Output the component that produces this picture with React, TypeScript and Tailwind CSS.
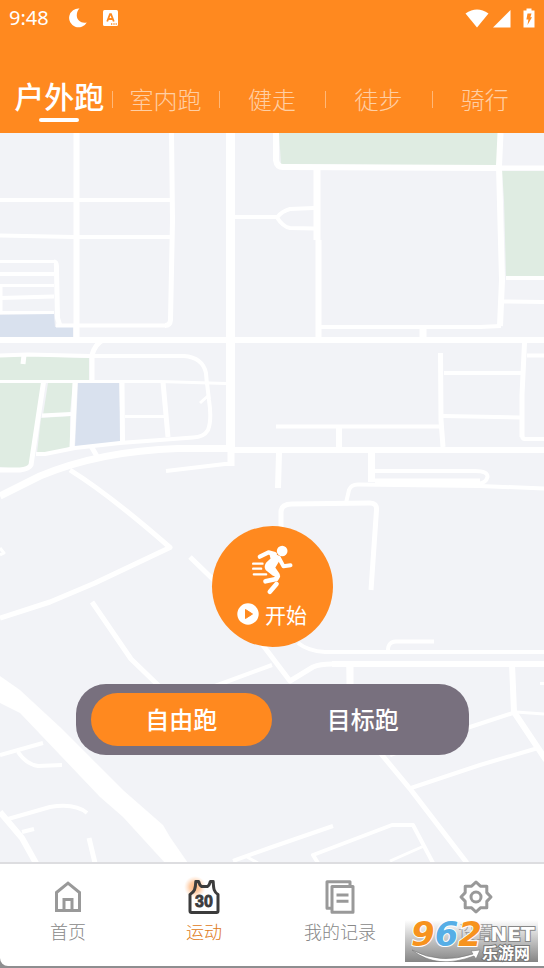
import { useState } from 'react'
import clsx from 'clsx'

const SPORTS = ['户外跑', '室内跑', '健走', '徒步', '骑行']
const MODES = ['自由跑', '目标跑']

const PARKS = [
  'M279 133H498V158L496 166L281 164Z',
  'M502 171H544V276H506L504 200Z',
  'M0 357L28 356L89 358V381H0Z',
  'M0 383H42L30 462Q28 468 18 469L0 467Z',
  'M48 383H73L70 413L43 415Z',
  'M41 418L70 416V447L58 451L37 453Z',
]

const LAKES = ['M0 315L54 314L55 327H73V337H0Z', 'M78 383H119L121 442L75 447Z']

const ROADS = [
  { w: 3, d: 'M0 261.5H54M0 285.5H54M0 312.5H54M1 287V312M0 381.5H160L226 383.5M125 416.5H164M209 395L200 403M0 548L4 553L0 555M516 712L544 714M540 683.5H544M390 861L424 846M247 857L258 863' },
  { w: 4, d: 'M0 200H170M0 235.5L74 237H170M235 217H277M0 274H54M0 298L54 296.5M56 325.5H166M0 355.5L28 354.5L90 356H184C198 357 204 364 206 373L207 385M42 415.5L71 414' },
  { w: 4, d: 'M207 383L209 400Q212 420 208 430Q204 437 193 437.5L120 443L75 448L45 454H36M166 471L225 464H231M215 686L272 665M272 847L333 826M233 861L272 847M0 755L43 743M18 752Q26 764 38 766L62 765M8 819L50 807Q75 803 87 813M22 832L34 829' },
  { w: 4, d: 'M506 278H544M504 301.5L544 302M314 208L290 209Q282 211 277 217.5Q283 227 290 228L314 228.5M444 373H522M443 416L520 417.5M527 355.5H544M276 426.5H440M522 435Q522 439 525 439H544M321 327H480L501 326M375 471H475Q488 471 487.5 477Q486 483 478 484' },
  { w: 4, d: 'M318 863L313 855L392 825H413L433 863M516 712L470 727L390 755M411 788L480 765L538 748M298 643Q308 651 325 652H544M388 652Q387 642 396 641.5H434M346 503L349 490Q351 484.5 358 484.5L480 486L544 488.5' },
  { w: 5, d: 'M171.5 133L172.5 220L170.5 320Q170 325.5 165 325.5M54 262Q57 262 56.5 270L57.5 318L60 326M103 340Q95 344 92 355V382M24 355L23 364M43.5 382L31 465Q29 469 20 470H0M75 383L72 447M122 382L122.5 443M163 382L168 437M91 446L98 458M70 470Q110 495 170 547.5L95 583L50 602L0 618' },
  { w: 5, d: 'M190 557L222 588M262 644L290 681L313 667Q320 664 332 664M92 602L118 640L131 659L160 687M89 838L95 863M349 666L350 700L364 733L382 755L411 790L467 863M497 168H544M440.5 353L441 420L443 447M524.5 343L522 395V437M281 530V512Q281 504 292 504L370 503Q377 503 376.5 510L371 590' },
  { w: 6, d: 'M76.5 133V337M276 133V160Q277 167 283 167L497 168M500.5 133L499 166L502 280L500 326M318.5 240V340M339 428V447M279 453L278 488M332 664H544M512 664L514 712L546 760M0 340H544M0 812L22 838L37 865M230 450H544' },
  { w: 7, d: 'M317 168V240M423 329V337M371.5 453V482M350 667V684M375 482H480M231 449V466M0 496L40 476Q100 451 178 448.5H232' },
  { w: 9, d: 'M230.5 133V452' },
]

// wide avenue whose width changes along the way
const AVENUE =
  'M0 676L20 690L60 727L90 757L123 790L163 825L170 837L188 863H165L123 817L100 797L60 755L20 713L10 708L0 703Z'

function MapBackground() {
  return (
    <svg
      className="absolute inset-0 h-full w-full"
      viewBox="0 133 544 729"
      preserveAspectRatio="xMidYMid slice"
      aria-hidden="true"
    >
      {PARKS.map((d) => (
        <path key={d} d={d} fill="#dfece2" />
      ))}
      {LAKES.map((d) => (
        <path key={d} d={d} fill="#d9e1ee" />
      ))}
      {ROADS.map((road) => (
        <path key={road.d} d={road.d} fill="none" stroke="#fff" strokeWidth={road.w} strokeLinejoin="round" />
      ))}
      <path d={AVENUE} fill="#fff" />
    </svg>
  )
}

function StatusBar() {
  return (
    <div className="flex h-9 items-center justify-between px-[9px]">
      <div className="flex items-center">
        <span className="font-['Noto_Sans'] text-[20px] leading-6">9:48</span>
        <svg className="ml-5 h-5 w-[18px]" viewBox="0 0 18 20" fill="currentColor" aria-hidden="true">
          <path d="M10.5 0.6A9.4 9.4 0 1 0 17.8 14.4C12.5 15.8 8.2 12.5 7.8 8C7.6 5 8.6 2.3 10.5 0.6Z" />
        </svg>
        <svg className="ml-4 h-4 w-[15px]" viewBox="0 0 15 16" aria-hidden="true">
          <rect width="15" height="16" rx="1.5" fill="#fff" />
          <path d="M4.2 11.5L7 4.2H8L10.8 11.5M5.3 9H9.7" fill="none" stroke="#ff891f" strokeWidth="1.8" />
          <path d="M8 14H9.3M10.4 14H11.6M12.6 14H13.8" stroke="#ff891f" strokeWidth="1.3" />
        </svg>
      </div>
      <div className="flex items-center">
        <svg className="h-[19px] w-6" viewBox="0 0 24 19" fill="currentColor" aria-hidden="true">
          <path d="M0.5 4.6Q12 -3.4 23.5 4.6L12 18.5Z" />
        </svg>
        <svg className="ml-1 h-[19px] w-[18px]" viewBox="0 0 18 19" fill="currentColor" aria-hidden="true">
          <path d="M0 18.5L17.5 1V18.5Z" />
        </svg>
        <svg className="ml-3 h-5 w-3" viewBox="0 0 12 20" aria-hidden="true">
          <path d="M0.5 2.5H3.5V0.5H8.5V2.5H11.5V19.5H0.5Z" fill="#fff" />
          <path d="M4.5 5.5H8.5L7.3 9.3H9L4.5 17L5.4 11.6H3.4Z" fill="#ff891f" />
        </svg>
      </div>
    </div>
  )
}

function RunnerIcon() {
  return (
    <svg className="h-[50px] w-[41px]" viewBox="0 0 122 150" fill="none" stroke="#fff" strokeLinecap="round" strokeLinejoin="round" aria-hidden="true">
      <circle cx="90" cy="18" r="16" fill="#fff" stroke="none" />
      <path d="M23 35L49 22L68 27" strokeWidth="13" />
      <path d="M56 26L82 38L64 68L78 88L64 88L44 72Q39 64 47 54L60 42Z" fill="#fff" strokeWidth="9" />
      <path d="M82 42L94 64L115 61" strokeWidth="12" />
      <path d="M54 74L77 94L72 102L40 109" strokeWidth="14" />
      <path d="M73 117L53 140" strokeWidth="14" />
      <path d="M3 56H31M3 71H27M5 88H42" strokeWidth="7" />
    </svg>
  )
}

function HomeIcon() {
  return (
    <svg className="size-9" viewBox="0 0 36 36" fill="none" stroke="#999" strokeWidth="3" aria-hidden="true">
      <path d="M6.5 13.5L18 4.2L29.5 13.5V31.5H6.5Z" />
      <path d="M14 31.5V20.5H22V31.5" />
    </svg>
  )
}

function JerseyIcon() {
  return (
    <svg className="size-9 overflow-visible" viewBox="0 0 36 36" aria-hidden="true">
      <defs>
        <radialGradient id="glow">
          <stop offset="0" stopColor="#ff9a4d" stopOpacity="0.75" />
          <stop offset="0.5" stopColor="#ffa864" stopOpacity="0.55" />
          <stop offset="1" stopColor="#ffc496" stopOpacity="0" />
        </radialGradient>
      </defs>
      <circle cx="9" cy="8" r="11" fill="url(#glow)" />
      <path
        d="M9.8 2.5H12.6C13.5 4 13 6 15.5 7.5H21.5C24 6 23.5 4 24.4 2.5H27.2C27.5 10 28 13 32 15.5V32Q32 33.5 30.5 33.5H5.5Q4 33.5 4 32V15.5C8.5 13 9.5 10 9.8 2.5Z"
        fill="none"
        stroke="#3c3c3c"
        strokeWidth="3"
        strokeLinejoin="round"
      />
      <text
        x="18"
        y="28"
        textAnchor="middle"
        stroke="#3c3c3c"
        strokeWidth="0.8"
        className="fill-[#3c3c3c] font-['Liberation_Sans'] text-[16px] font-bold"
      >
        30
      </text>
    </svg>
  )
}

function RecordIcon() {
  return (
    <svg className="size-9" viewBox="0 0 36 36" fill="none" stroke="#999" strokeWidth="3" strokeLinejoin="round" aria-hidden="true">
      <path d="M28 7V2.7H5V29.3H9.5" />
      <path d="M10 7.5H31V33.3H10Z" />
      <path d="M14.5 16H26.5M14.5 22.3H26.5" />
    </svg>
  )
}

function SettingsIcon() {
  return (
    <svg className="size-9" viewBox="0 0 36 36" fill="none" stroke="#999" strokeWidth="3" strokeLinejoin="round" aria-hidden="true">
      <path d="M18 3L22.4 7.2H28.8V13.6L33 18L28.8 22.4V28.8H22.4L18 33L13.6 28.8H7.2V22.4L3 18L7.2 13.6V7.2H13.6Z" />
      <circle cx="18" cy="18" r="5" />
    </svg>
  )
}

const NAV_ITEMS = [
  { label: '首页', Icon: HomeIcon },
  { label: '运动', Icon: JerseyIcon, active: true },
  { label: '我的记录', Icon: RecordIcon },
  { label: '设置', Icon: SettingsIcon },
]

function SiteBadge() {
  return (
    <div className="pointer-events-none absolute bottom-1 right-1.5 h-[42px] w-[133px] bg-gradient-to-b from-white/20 to-[#858585]">
      <svg className="absolute inset-0 h-full w-full" viewBox="0 0 133 42" aria-hidden="true">
        <path d="M7 30Q35 45 68 34L66 31L75 30L71 39L69 36Q32 50 7 30Z" fill="#fff" stroke="#777" strokeWidth="0.6" />
      </svg>
      <span className="absolute left-1.5 top-0 font-['DejaVu_Sans'] text-[34px] font-bold italic leading-7 text-[#f7931e] [-webkit-text-stroke:2px_white] [paint-order:stroke_fill]">
        9<span className="text-[#56aee6]">6</span>2
      </span>
      <span className="absolute left-[78px] top-1.5 font-['DejaVu_Sans'] text-[20px] font-bold leading-4 text-white [-webkit-text-stroke:2px_#888] [paint-order:stroke_fill]">
        .NET
      </span>
      <span className="absolute bottom-0.5 left-[77px] text-[16px] font-bold leading-4 text-white [-webkit-text-stroke:2px_#777] [paint-order:stroke_fill]">
        乐游网
      </span>
    </div>
  )
}

export default function App() {
  const [sport, setSport] = useState(SPORTS[0])
  const [mode, setMode] = useState(MODES[0])

  return (
    <div className="flex min-h-screen flex-col bg-[#f2f3f7] font-['Noto_Sans_CJK_SC',sans-serif]">
      <header className="bg-[#ff891f] text-white">
        <StatusBar />
        <div className="grid grid-cols-5 px-1.5 pb-3 pt-10">
          {SPORTS.map((item, i) => (
            <button
              key={item}
              onClick={() => setSport(item)}
              className="relative flex h-[45px] items-center justify-center whitespace-nowrap"
            >
              {i > 0 && <span className="absolute left-0 top-[15px] h-[17px] w-px bg-white/40" />}
              {sport === item ? (
                <span className="pb-2 text-[30px] font-medium leading-9">{item}</span>
              ) : (
                <span className="text-[24px] font-light leading-9 text-white/60">{item}</span>
              )}
              {sport === item && (
                <span className="absolute -bottom-px left-1/2 h-1 w-10 -translate-x-1/2 rounded-full bg-white" />
              )}
            </button>
          ))}
        </div>
      </header>

      <main className="relative flex flex-1 flex-col items-center justify-end gap-[37px] overflow-hidden px-4 pb-[107px]">
        <MapBackground />
        <button className="relative flex size-[121px] flex-col items-center gap-[7px] rounded-full bg-[#ff891f] pt-[19px] text-white">
          <RunnerIcon />
          <span className="flex items-center gap-1.5 text-[21px] leading-6">
            <svg className="size-[22px]" viewBox="0 0 22 22" aria-hidden="true">
              <circle cx="11" cy="11" r="10.7" fill="#fff" />
              <path d="M8.5 6.5L15.5 11L8.5 15.5Z" fill="#ff891f" stroke="#ff891f" strokeLinejoin="round" />
            </svg>
            开始
          </span>
        </button>
        <div className="relative grid w-full max-w-[393px] grid-cols-2 rounded-[30px] bg-[#78707e] px-[15px] py-[9px]">
          {MODES.map((item) => (
            <button
              key={item}
              onClick={() => setMode(item)}
              className={clsx(
                'h-[53px] rounded-full pb-0.5 text-[24px] font-medium text-white',
                mode === item && 'bg-[#ff891f]'
              )}
            >
              {item}
            </button>
          ))}
        </div>
      </main>

      <div className="bg-[#8e8e90] pb-0.5">
        <nav className="relative grid grid-cols-4 rounded-bl-lg border-t-2 border-[#dddde0] bg-white pb-[23px] pt-[15px]">
          {NAV_ITEMS.map(({ label, Icon, active }) => (
            <a key={label} href="#" className="flex flex-col items-center gap-1">
              <Icon />
              <span className={clsx('text-[18px] font-light leading-6', active ? 'text-[#e07a20]' : 'text-[#888]')}>
                {label}
              </span>
            </a>
          ))}
          <SiteBadge />
        </nav>
      </div>
    </div>
  )
}
